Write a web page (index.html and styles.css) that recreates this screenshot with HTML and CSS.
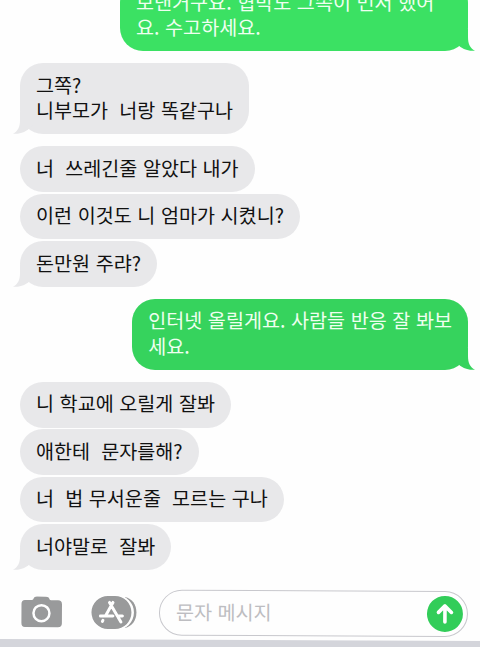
FILE: index.html
```
<!DOCTYPE html>
<html lang="ko">
<head>
    <meta charset="UTF-8">
    <meta name="viewport" content="width=device-width, initial-scale=1.0">
    <title>문자 메시지</title>
    <link rel="stylesheet" href="styles.css">
</head>
<body>
    <div class="phone">
        <main class="chat">
            <div class="group sent first">
                <div class="bubble tail">보낸거구요. 협박도 그쪽이 먼저 했어<br>요. 수고하세요.<svg class="tail-shape" viewBox="0 0 22 22"><path d="M15 0V8C15 15 17 19 22 21.800C17 22 13 21.500 7.500 18L0 12V0Z"/></svg></div>
            </div>

            <div class="group received">
                <div class="bubble tail">그쪽?<br>니부모가  너랑 똑같구나<svg class="tail-shape" viewBox="0 0 22 22"><path d="M15 0V8C15 15 17 19 22 21.800C17 22 13 21.500 7.500 18L0 12V0Z"/></svg></div>
            </div>

            <div class="group received">
                <div class="bubble">너  쓰레긴줄 알았다 내가</div>
                <div class="bubble">이런 이것도 니 엄마가 시켰니?</div>
                <div class="bubble tail">돈만원 주랴?<svg class="tail-shape" viewBox="0 0 22 22"><path d="M15 0V8C15 15 17 19 22 21.800C17 22 13 21.500 7.500 18L0 12V0Z"/></svg></div>
            </div>

            <div class="group sent second">
                <div class="bubble tail">인터넷 올릴게요. 사람들 반응 잘 봐보<br>세요.<svg class="tail-shape" viewBox="0 0 22 22"><path d="M15 0V8C15 15 17 19 22 21.800C17 22 13 21.500 7.500 18L0 12V0Z"/></svg></div>
            </div>

            <div class="group received">
                <div class="bubble">니 학교에 오릴게 잘봐</div>
                <div class="bubble">애한테  문자를해?</div>
                <div class="bubble">너  법 무서운줄  모르는 구나</div>
                <div class="bubble tail">너야말로  잘봐<svg class="tail-shape" viewBox="0 0 22 22"><path d="M15 0V8C15 15 17 19 22 21.800C17 22 13 21.500 7.500 18L0 12V0Z"/></svg></div>
            </div>
        </main>

        <footer class="composer">
            <svg class="camera" viewBox="0 0 42 32">
                <path fill="#999a9b" d="M4 4H11C13 4 12 0.5 16 0.5H25C29 0.5 28 4 30 4H37Q41 4 41 8V27Q41 31 37 31H4Q0.5 31 0.5 27V8Q0.5 4 4 4Z"/>
                <circle cx="20.5" cy="17" r="8" fill="none" stroke="#fff" stroke-width="2.5"/>
            </svg>
            <svg class="apps" viewBox="0 0 46 34">
                <path fill="#999a9b" d="M34 1.5C41 3 45.500 9 45.500 17S41 31 34 32.500Z"/>
                <rect x="-1" y="-.5" width="44" height="35" rx="17.500" fill="#fff"/>
                <rect x="0.500" y="0.500" width="40" height="33" rx="16.500" fill="#999a9b"/>
                <g fill="none" stroke="#fff" stroke-width="3" stroke-linecap="round">
                    <path d="M18.500 7L30 26.500M22 7L14.500 20.500M9.500 20.500H22M26.500 20.500H31.500M12 25L11.500 26"/>
                </g>
            </svg>
            <div class="field">
                <span class="placeholder">문자 메시지</span>
                <button class="send" type="button" aria-label="보내기">
                    <svg viewBox="0 0 36 36">
                        <path d="M18 26V10.500M11.500 16.500L18 10L24.500 16.500"/>
                    </svg>
                </button>
            </div>
        </footer>
        <div class="keyboard-edge"></div>
    </div>
</body>
</html>
```

FILE: styles.css
```
* {
    margin: 0;
    padding: 0;
    box-sizing: border-box;
}

body {
    font-family: 'Noto Sans CJK KR', sans-serif;
    background: #fefefe;
    color: #111;
    overflow: hidden;
}

.phone {
    height: 647px;
    display: flex;
    flex-direction: column;
    overflow: hidden;
}

.chat {
    height: 583px;
    flex: none;
    display: flex;
    flex-direction: column;
    gap: 12px;
    padding: 0 12px 0 20px;
    margin-top: -20px;
}

.group {
    display: flex;
    flex-direction: column;
    gap: 1.8px;
}

.received {
    align-items: flex-start;
}

.sent {
    align-items: flex-end;
}

.bubble {
    position: relative;
    padding: 8.5px 16px 11.5px;
    border-radius: 23px;
    background: #e8e8ea;
    font-size: 19.6px;
    line-height: 25.6px;
    word-spacing: 0.1px;
    white-space: pre;
}

.sent .bubble {
    background: #36d35d;
    color: #effff0;
}

.first .bubble {
    width: 348px;
    background: #3be163;
}

.tail-shape {
    position: absolute;
    right: -7px;
    bottom: 0;
    width: 22px;
    height: 22px;
    fill: #36d35d;
}

.first .tail-shape {
    fill: #3be163;
}

.received .tail-shape {
    right: auto;
    left: -7px;
    fill: #e8e8ea;
    transform: scaleX(-1);
}

.composer {
    height: 77px;
    flex: none;
    display: flex;
    align-items: center;
    padding: 23px 12px 0 21px;
    transform: rotate(0.25deg);
}

.camera {
    width: 42px;
    height: 32px;
    margin-right: 28px;
}

.apps {
    width: 46px;
    height: 34px;
    margin-right: 22px;
}

.field {
    flex: 1;
    height: 46px;
    display: flex;
    align-items: center;
    justify-content: space-between;
    padding: 0 4px 0 16px;
    border: 1.5px solid #c8c8cd;
    border-radius: 23px;
}

.placeholder {
    padding-bottom: 2px;
    color: #bdbdc1;
    font-size: 19.6px;
    line-height: 26px;
}

.send {
    width: 36px;
    height: 36px;
    border: none;
    border-radius: 50%;
    background: #32cd59;
}

.send svg {
    display: block;
    fill: none;
    stroke: #fff;
    stroke-width: 3.6;
    stroke-linecap: round;
    stroke-linejoin: round;
}

.keyboard-edge {
    height: 20px;
    flex: none;
    margin: 0 -4px;
    background: #d4d5db;
    transform: rotate(0.25deg);
}
```
